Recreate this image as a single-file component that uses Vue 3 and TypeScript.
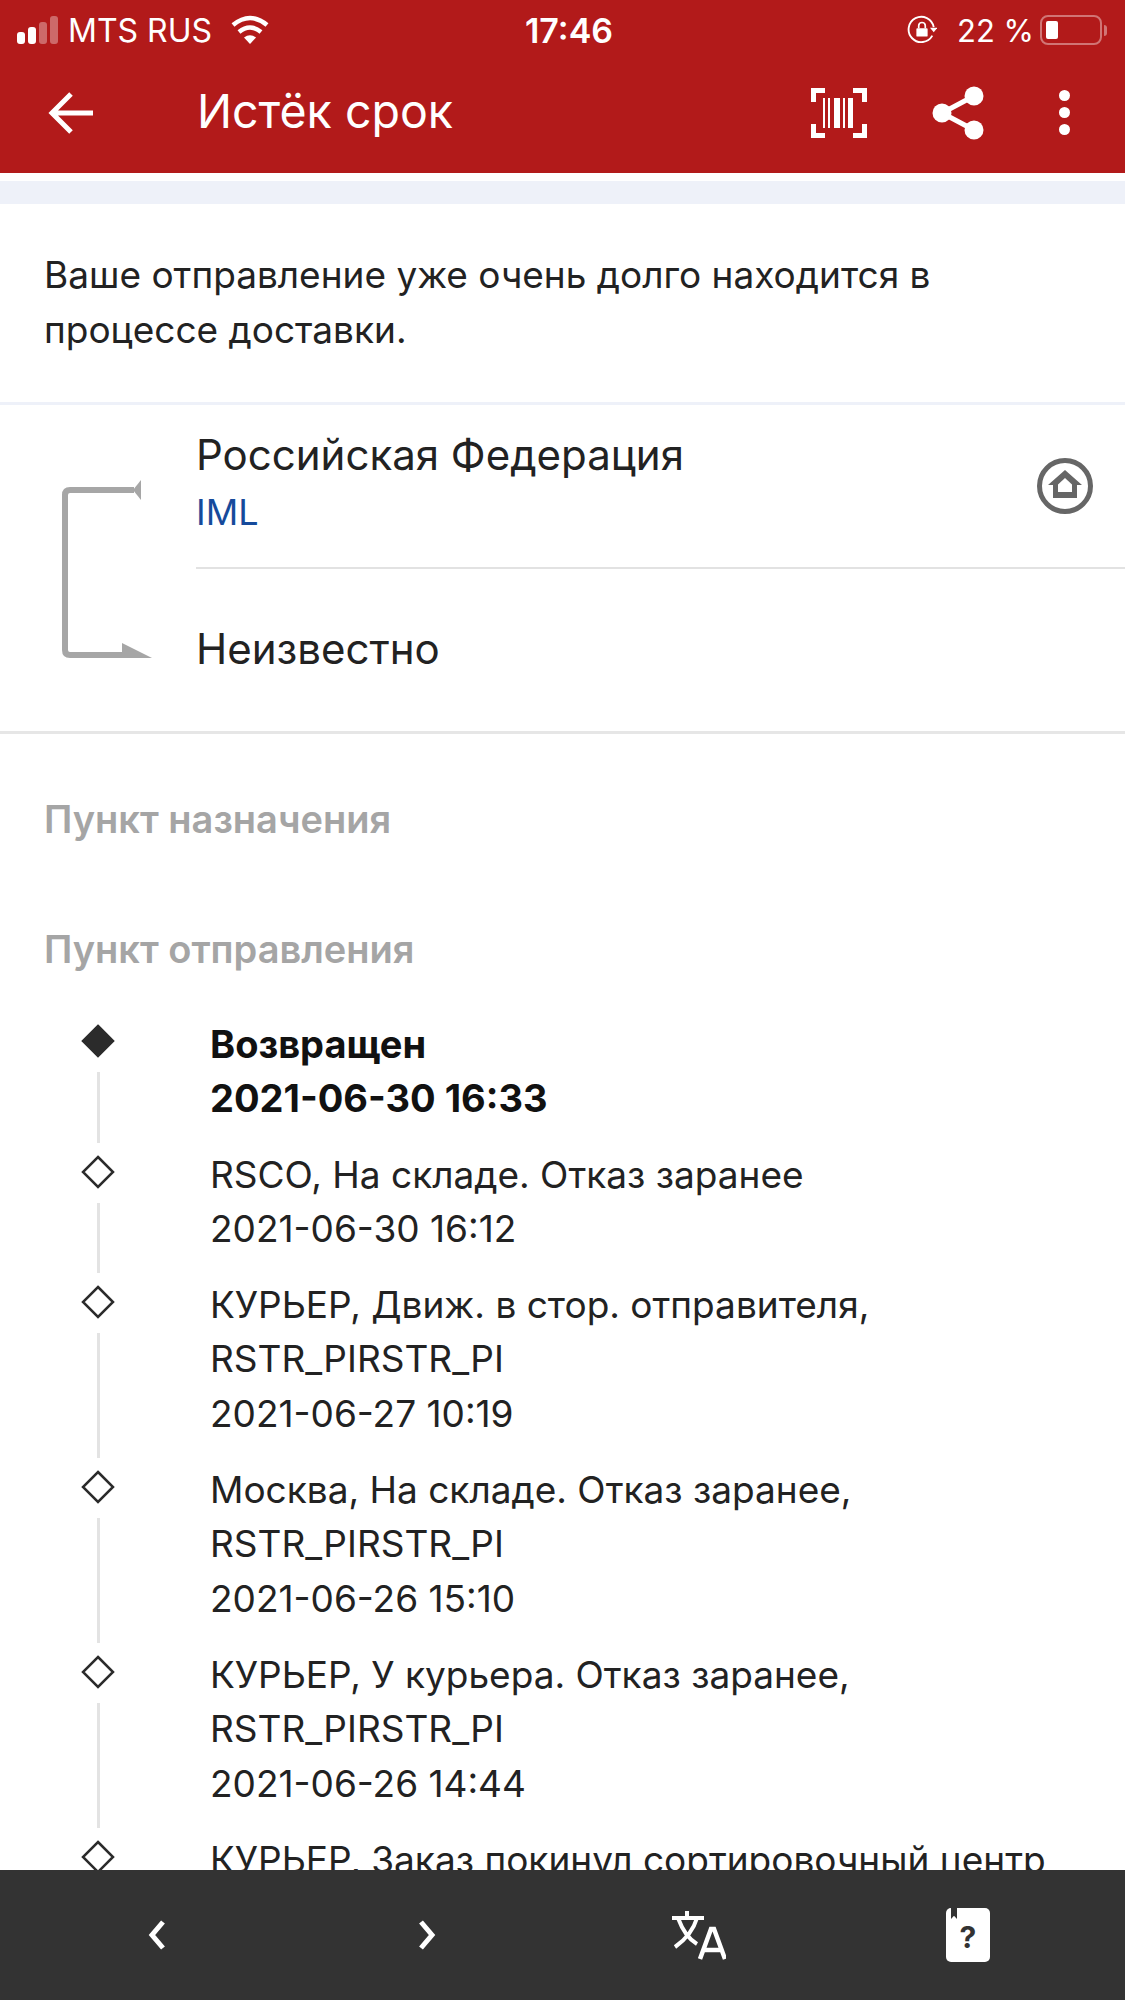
<template>
  <div class="screen">
    <div class="top">
      <div class="status">
        <div class="status-left">
          <div class="signal">
            <i class="b1"></i><i class="b2"></i><i class="b3"></i><i class="b4"></i>
          </div>
          <span>MTS RUS</span>
          <svg class="wifi" viewBox="0 0 40 30">
            <path d="M20 29 14 22.500Q20 18 26 22.500Z" fill="#fff" />
            <path d="M9 17Q20 8 31 17" fill="none" stroke="#fff" stroke-width="4.500" />
            <path d="M3 10Q20-4 37 10" fill="none" stroke="#fff" stroke-width="4.500" />
          </svg>
        </div>
        <div class="time">17:46</div>
        <div class="status-right">
          <svg class="lock" viewBox="0 0 32 32">
            <path d="M27 22A13.500 13.500 0 1 1 28.500 13" fill="none" stroke="#fff" stroke-width="2" />
            <path d="M24.500 13.500h8l-4 5z" fill="#fff" />
            <rect x="10" y="14" width="12" height="9" rx="1" fill="#fff" />
            <path d="M12.500 14v-2.500a3.500 3.500 0 0 1 7 0V14" fill="none" stroke="#fff" stroke-width="1.800" />
          </svg>
          <span>22 %</span>
          <div class="battery"><div class="charge" :style="{ width: batteryLevel + '%' }"></div></div>
          <div class="nub"></div>
        </div>
      </div>
      <div class="toolbar">
        <svg class="back" viewBox="0 0 46 44">
          <path d="M45 22H4M23 3 4 22l19 19" fill="none" stroke="#fff" stroke-width="5" />
        </svg>
        <div class="title">Истёк срок</div>
        <svg class="barcode" viewBox="0 0 56 50">
          <path d="M14 2.500H2.500V14M42 2.500H53.500V14M14 47.500H2.500V36M42 47.500H53.500V36" fill="none" stroke="#fff" stroke-width="5" />
          <path d="M12 10h2v30h-2zM17 10h2v30h-2zM23 10h6v30h-6zM32 10h2v30h-2zM37 10h5v30h-5z" fill="#fff" />
        </svg>
        <svg class="share" viewBox="0 0 52 54">
          <path d="M42 10 10 27l32 17" fill="none" stroke="#fff" stroke-width="5" />
          <circle cx="42" cy="10" r="9.500" fill="#fff" />
          <circle cx="10" cy="27" r="9.500" fill="#fff" />
          <circle cx="42" cy="44" r="9.500" fill="#fff" />
        </svg>
        <div class="dots"><i></i><i></i><i></i></div>
      </div>
    </div>

    <div class="content">
      <div class="stripe"></div>
      <p class="message">Ваше отправление уже очень долго находится в процессе доставки.</p>

      <div class="route">
        <svg class="route-icon" viewBox="0 0 88 176">
          <path d="M72 4H8Q3 4 3 9V164Q3 169 8 169H62" fill="none" stroke="#a6a6a6" stroke-width="6" />
          <path d="M71 4 79-6V14Z" fill="#a6a6a6" />
          <path d="M60 157 90 172H60Z" fill="#a6a6a6" />
        </svg>
        <div class="route-body">
          <div class="route-from">
            <div class="route-text">
              <div class="country">Российская Федерация</div>
              <div class="carrier">IML</div>
            </div>
            <svg class="home" viewBox="0 0 56 56">
              <circle cx="28" cy="28" r="25.500" fill="none" stroke="#666" stroke-width="5" />
              <path d="M28 12 45 27H40V40H16V27H11Z" fill="#666" />
              <path d="M28 20 35 26.500V34H21V26.500Z" fill="#fff" />
            </svg>
          </div>
          <div class="route-to">Неизвестно</div>
        </div>
      </div>

      <h3 class="section first">Пункт назначения</h3>
      <h3 class="section second">Пункт отправления</h3>

      <ul class="events">
        <li v-for="(event, i) in events" :key="i" class="event" :class="{ current: i === 0 }">
          <div class="marker">
            <svg class="diamond" viewBox="0 0 34 34">
              <path d="M17 2 32 17 17 32 2 17Z" :fill="i === 0 ? '#2b2b2b' : '#fff'" stroke="#2b2b2b" stroke-width="2.500" />
            </svg>
            <div class="stem"></div>
          </div>
          <div class="lines">
            <div v-for="line in event" :key="line">{{ line }}</div>
          </div>
        </li>
      </ul>
    </div>

    <div class="bottom">
      <svg class="chev" viewBox="0 0 20 32">
        <path d="M16 3 5 16l11 13" fill="none" stroke="#fff" stroke-width="5" />
      </svg>
      <svg class="chev" viewBox="0 0 20 32">
        <path d="M4 3l11 13L4 29" fill="none" stroke="#fff" stroke-width="5" />
      </svg>
      <svg class="translate" viewBox="0 0 56 52">
        <path d="M2 9H34M17 2V9M8 9Q15 28 27 35M27 9Q22 26 5 38" fill="none" stroke="#fff" stroke-width="4" />
        <path d="M30 50 41 20H44L55 50M34 41H51" fill="none" stroke="#fff" stroke-width="4.500" />
      </svg>
      <div class="card">
        <span class="flag"></span>
        <span class="mark">?</span>
      </div>
    </div>
  </div>
</template>

<script setup lang="ts">
const batteryLevel = 24;

const events: string[][] = [
  ["Возвращен", "2021-06-30 16:33"],
  ["RSCO, На складе. Отказ заранее", "2021-06-30 16:12"],
  ["КУРЬЕР, Движ. в стор. отправителя,", "RSTR_PIRSTR_PI", "2021-06-27 10:19"],
  ["Москва, На складе. Отказ заранее,", "RSTR_PIRSTR_PI", "2021-06-26 15:10"],
  ["КУРЬЕР, У курьера. Отказ заранее,", "RSTR_PIRSTR_PI", "2021-06-26 14:44"],
  ["КУРЬЕР, Заказ покинул сортировочный центр"],
];
</script>

<style>
html,
body {
  margin: 0;
  background: #fff;
}
</style>

<style scoped>
.screen {
  width: 1125px;
  height: 2000px;
  display: flex;
  flex-direction: column;
  overflow: hidden;
  font-family: Inter, "Liberation Sans", sans-serif;
  color: #222;
}

.top {
  height: 173px;
  flex: none;
  background: #b21a1a;
  color: #fff;
}

.status {
  height: 60px;
  display: grid;
  grid-template-columns: 1fr auto 1fr;
  align-items: center;
  padding: 0 18px 0 17px;
  font-size: 32px;
}

.status-left,
.status-right {
  display: flex;
  align-items: center;
}

.status-right {
  justify-content: flex-end;
  font-size: 31px;
}

.signal {
  display: flex;
  align-items: flex-end;
  gap: 3px;
  height: 28px;
  margin-right: 10px;
}

.signal i {
  width: 8px;
  border-radius: 3px;
  background: #fff;
}

.signal .b1 {
  height: 12px;
}

.signal .b2 {
  height: 17px;
}

.signal .b3 {
  height: 22px;
  opacity: 0.35;
}

.signal .b4 {
  height: 28px;
  opacity: 0.35;
}

.wifi {
  width: 40px;
  height: 30px;
  margin-left: 18px;
}

.time {
  margin-left: 14px;
  font-size: 34px;
  font-weight: 600;
}

.lock {
  width: 30px;
  height: 30px;
  margin-right: 20px;
}

.battery {
  width: 62px;
  height: 30px;
  margin-left: 6px;
  padding: 4px;
  box-sizing: border-box;
  border: 2px solid rgba(255, 255, 255, 0.4);
  border-radius: 8px;
}

.charge {
  height: 100%;
  background: #fff;
  border-radius: 2px;
}

.nub {
  width: 3px;
  height: 11px;
  margin-left: 2px;
  background: rgba(255, 255, 255, 0.4);
  border-radius: 0 3px 3px 0;
}

.toolbar {
  height: 113px;
  display: flex;
  align-items: center;
  padding-bottom: 8px;
  box-sizing: border-box;
}

.back {
  width: 46px;
  height: 44px;
  margin-left: 48px;
  flex: none;
}

.title {
  flex: 1;
  margin: 0 0 4px 103px;
  font-size: 46.500px;
}

.barcode {
  width: 56px;
  height: 50px;
}

.share {
  width: 52px;
  height: 54px;
  margin-left: 65px;
}

.dots {
  display: flex;
  flex-direction: column;
  gap: 6px;
  margin: 0 55px 0 75px;
}

.dots i {
  width: 11px;
  height: 11px;
  border-radius: 50%;
  background: #fff;
}

.content {
  flex: 1;
  min-height: 0;
  overflow: hidden;
}

.stripe {
  height: 23px;
  margin-top: 8px;
  background: #eef1f9;
}

.message {
  margin: 0;
  padding: 43px 44px 45px;
  font-size: 37px;
  line-height: 55px;
  border-bottom: 3px solid #eef1f9;
}

.route {
  display: flex;
  height: 329px;
  box-sizing: border-box;
  border-bottom: 3px solid #e6e6e6;
}

.route-icon {
  width: 88px;
  height: 176px;
  flex: none;
  margin: 81px 46px 0 62px;
  overflow: visible;
}

.route-body {
  flex: 1;
  min-width: 0;
}

.route-from {
  height: 164px;
  display: flex;
  align-items: center;
  box-sizing: border-box;
  padding: 0 32px 6px 0;
  border-bottom: 2px solid #e2e2e2;
}

.route-text {
  flex: 1;
}

.country {
  font-size: 42px;
  line-height: 58px;
}

.carrier {
  font-size: 36px;
  line-height: 56px;
  color: #164a9b;
}

.home {
  width: 56px;
  height: 56px;
  margin-top: 5px;
}

.route-to {
  font-size: 42px;
  line-height: 160px;
}

.section {
  margin: 0 0 0 44px;
  font-size: 38px;
  font-weight: 600;
  line-height: 50px;
  color: #a5a5a5;
}

.section.first {
  margin-top: 60px;
}

.section.second {
  margin-top: 80px;
}

.events {
  list-style: none;
  margin: 43px 0 0;
  padding: 0;
}

.event {
  display: flex;
  padding-left: 81px;
}

.marker {
  width: 34px;
  flex: none;
  display: flex;
  flex-direction: column;
  align-items: center;
  padding-top: 7px;
}

.diamond {
  width: 34px;
  height: 34px;
  flex: none;
}

.stem {
  flex: 1;
  width: 3px;
  margin: 14px 0 5px;
  background: #e3e3e3;
}

.lines {
  margin-left: 95px;
  padding-bottom: 22px;
  font-size: 37px;
  line-height: 54.300px;
  color: #222;
  white-space: nowrap;
}

.current .lines {
  font-size: 38px;
  font-weight: 700;
  color: #111;
}

.bottom {
  height: 130px;
  flex: none;
  display: flex;
  align-items: center;
  background: #333;
  position: relative;
}

.chev {
  width: 20px;
  height: 32px;
  margin-left: 147px;
}

.chev + .chev {
  margin-left: 250px;
}

.translate {
  width: 56px;
  height: 52px;
  margin-left: 233px;
}

.card {
  width: 44px;
  height: 54px;
  margin-left: 220px;
  background: #fff;
  border-radius: 5px;
  position: relative;
  display: flex;
  align-items: center;
  justify-content: center;
  color: #333;
}

.flag {
  position: absolute;
  left: 5px;
  top: 0;
  width: 6px;
  height: 11px;
  background: #333;
  clip-path: polygon(0 0, 100% 0, 100% 100%, 50% 70%, 0 100%);
}

.mark {
  font-size: 30px;
  font-weight: 700;
  margin-top: 4px;
}
</style>
